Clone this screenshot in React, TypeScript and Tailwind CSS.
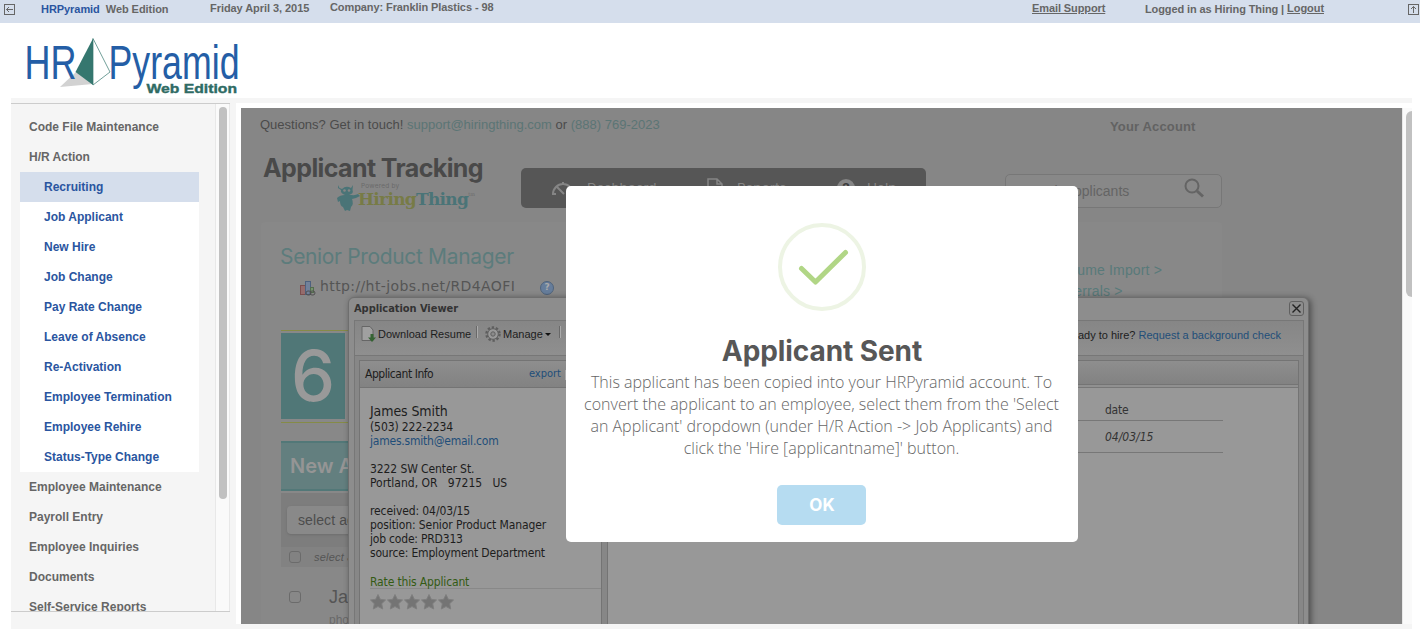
import { ReactNode } from 'react'
import clsx from 'clsx'

const subItems = [
  'Recruiting',
  'Job Applicant',
  'New Hire',
  'Job Change',
  'Pay Rate Change',
  'Leave of Absence',
  'Re-Activation',
  'Employee Termination',
  'Employee Rehire',
  'Status-Type Change',
]

const lowerItems = [
  'Employee Maintenance',
  'Payroll Entry',
  'Employee Inquiries',
  'Documents',
  'Self-Service Reports',
]

function TopBar() {
  return (
    <header className="flex h-[23px] items-start bg-[#d5deec] text-[11px] leading-[13px] font-bold tracking-[-0.060px] text-[#666] whitespace-nowrap">
      <svg className="mt-1 ml-1 h-[11px] w-[11px] shrink-0" viewBox="0 0 11 11" fill="none" stroke="#666">
        <rect x="0.5" y="0.5" width="10" height="10" />
        <path d="M2.5 5.5H9M5 3L2.5 5.5L5 8" />
      </svg>
      <div className="mt-[3px] ml-[26px] w-[169px]">
        <span className="text-[#2a55a0]">HRPyramid</span>
        <span className="ml-1.5">Web Edition</span>
      </div>
      <span className="mt-[2px] w-[120px]">Friday April 3, 2015</span>
      <span className="mt-px w-[702px] tracking-[-0.090px]">Company: Franklin Plastics - 98</span>
      <span className="mt-[2px] w-[113px] tracking-[-0.100px] underline">Email Support</span>
      <span className="mt-[3px] tracking-[-0.100px]">Logged in as Hiring Thing |</span>
      <span className="mt-[2px] ml-[3px] underline">Logout</span>
      <svg className="mt-1 mr-[1px] ml-auto h-[11px] w-[11px] shrink-0" viewBox="0 0 11 11" fill="none" stroke="#666">
        <rect x="0.5" y="0.5" width="10" height="10" />
        <path d="M5.5 9V2.5M3 5L5.5 2.5L8 5" />
      </svg>
    </header>
  )
}

function Logo() {
  return (
    <svg className="ml-5 block h-[75px] w-[240px]" viewBox="20 23 240 75">
      <path d="M60 87L76 72L93 84Z" fill="#d2d2d2" />
      <g fontFamily="'Liberation Sans', sans-serif" fontSize="49" fill="#245ea6">
        <text x="24.500" y="79" textLength="52" lengthAdjust="spacingAndGlyphs">HR</text>
        <text x="108.500" y="79" textLength="131" lengthAdjust="spacingAndGlyphs">Pyramid</text>
      </g>
      <path d="M93 38.500L75.500 72L93 85Z" fill="#35776f" />
      <path d="M93 38.500L110 72L93 85Z" fill="#fff" stroke="#35776f" strokeWidth="0.700" />
      <text x="146.500" y="93" fontFamily="'Liberation Sans', sans-serif" fontWeight="700" fontSize="13.500" fill="#2f6b64" stroke="#2f6b64" strokeWidth="0.400" textLength="90.500" lengthAdjust="spacingAndGlyphs">
        Web Edition
      </text>
    </svg>
  )
}

function Sidebar() {
  return (
    <aside className="flex h-[509px] w-[219px] shrink-0 overflow-hidden border-y border-[#ccc] text-[12px] leading-[30px] font-bold text-[#666]">
      <nav className="w-[188px] pt-2 pl-[9px]">
        <div className="pl-[9px]">Code File Maintenance</div>
        <div className="pl-[9px]">H/R Action</div>
        <ul className="bg-white text-[#2a55a0]">
          {subItems.map((item, i) => (
            <li key={item} className={clsx('h-[30px] pl-6', i === 0 && 'bg-[#d5deec]')}>{item}</li>
          ))}
        </ul>
        {lowerItems.map((item) => (
          <div key={item} className="h-[30px] pl-[9px]">{item}</div>
        ))}
      </nav>
      <div className="ml-auto w-[15px] border-x border-[#e8e8e8] bg-[#fafafa] pt-[3px] pl-[3px]">
        <div className="h-[392px] w-2 rounded-full bg-[#c1c1c1]" />
      </div>
    </aside>
  )
}

function Mascot() {
  return (
    <svg className="h-7 w-[23px] shrink-0" viewBox="0 0 23 28" fill="#4a7477">
      <path d="M1 1L2.500 4L5 5Q9 1 14 4L16 1L15.500 6Q17 10 12 10.500Q18 12 21 10L23 12L19 14L15 15Q17 20 14 23L13 27L10 26L8 27L6 23Q3 22 3 17L1 18L0 14Q3 11 8 11Q3 9 4 6L1 4Z" />
      <circle cx="7.500" cy="6.500" r="1.300" fill="#868686" />
      <circle cx="12" cy="6.500" r="1.300" fill="#868686" />
    </svg>
  )
}

function PageTop() {
  return (
    <div className="h-[114px]">
      <div className="flex h-[34px] items-center pl-[19px] text-[13px] text-[#4b4b4b]">
        <p className="w-[850px] tracking-[0.010px]">
          Questions? Get in touch! <span className="text-[#5b7575]">support@hiringthing.com</span> or{' '}
          <span className="text-[#5b7575]">(888) 769-2023</span>
        </p>
        <span className="mt-1 font-bold tracking-[0.150px] text-[#626262]">Your Account</span>
      </div>
      <div className="flex pl-[22px]">
        <div className="mt-2.5 w-[258px] shrink-0">
          <h1 className="font-['Inter'] text-[25px] leading-8 font-bold tracking-[-0.600px] whitespace-nowrap text-[#494949]">Applicant Tracking</h1>
          <div className="flex pl-[74px]">
            <Mascot />
            <div className="-mt-[3px] ml-[-2px] whitespace-nowrap">
              <div className="h-[7px] pl-[3px] font-['Inter'] text-[6.500px] leading-[10px] tracking-[0.200px] text-[#6a6a6a]">Powered by</div>
              <div className="flex font-['DejaVu_Serif'] text-[17px] leading-[22px] font-bold tracking-[-0.700px]">
                <span className="text-[#777b46]">Hiring</span>
                <span className="text-[#4a7477]">Thing</span>
                <span className="text-[5px] leading-3 font-normal tracking-normal text-[#6c6c6c]">tm</span>
              </div>
            </div>
          </div>
        </div>
        <div className="mt-[26px] flex h-10 w-[405px] shrink-0 rounded-[5px] bg-[#565656] font-['Inter'] text-[13.500px] text-[#858585]">
          <div className="flex h-10 w-[155px] items-center pl-[30px]">
            <svg className="h-5 w-6" viewBox="0 0 24 20" fill="none" stroke="#858585" strokeWidth="2">
              <path d="M2 16A10 10 0 0 1 22 16M1 16H5M23 16H19M12 4V7M5 8L13 16" />
            </svg>
            <span className="ml-3">Dashboard</span>
          </div>
          <div className="flex h-10 w-[130px] items-center pl-[31px]">
            <svg className="h-5 w-4" viewBox="0 0 16 20" fill="none" stroke="#858585" strokeWidth="1.500">
              <path d="M1 1H10L15 6V19H1ZM10 1V6H15M4 9H12" />
            </svg>
            <span className="ml-3.5">Reports</span>
          </div>
          <div className="flex h-10 items-center pl-[31px]">
            <span className="flex h-[18px] w-[18px] items-center justify-center rounded-full bg-[#858585] font-bold text-[#3d3d3d]">?</span>
            <span className="ml-3">Help</span>
          </div>
        </div>
        <div className="mt-8 ml-[79px] flex h-[34px] w-[217px] shrink-0 items-center rounded-[5px] border border-[#777] bg-[#888] pr-[17px] pl-3 text-[14px] text-[#646464]">
          <span>Search applicants</span>
          <svg className="-mt-1.5 ml-auto h-5 w-5" viewBox="0 0 20 20" fill="none" stroke="#646464" strokeWidth="2">
            <circle cx="8" cy="8" r="6.500" />
            <path d="M13 13L19 18.500" strokeWidth="3" />
          </svg>
        </div>
      </div>
    </div>
  )
}

function JobCard() {
  return (
    <div className="ml-5 h-[402px] w-[961px] rounded-t bg-[#888] px-5 pt-5">
      <div className="flex justify-between">
        <div className="-ml-px">
          <h2 className="font-['Inter'] text-[21px] leading-[30px] tracking-[-0.340px] text-[#5c7c7c]">Senior Product Manager</h2>
          <div className="flex h-7 items-center pl-5 font-['DejaVu_Sans'] text-[14px] text-[#555]">
            <svg className="mt-1 mr-1 h-[15px] w-4" viewBox="0 0 16 15">
              <rect x="0.500" y="4.500" width="5" height="9" fill="#956c6c" stroke="#7b4e4e" />
              <rect x="5.500" y="0.500" width="5" height="13" fill="#71819b" stroke="#4d617f" />
              <rect x="10.500" y="6.500" width="3" height="5" fill="#76936e" stroke="#536c4e" />
              <rect x="6" y="10" width="5" height="4" rx="2" fill="none" stroke="#505050" />
              <rect x="10" y="10" width="5" height="4" rx="2" fill="none" stroke="#505050" />
            </svg>
            <span className="w-[196px] tracking-[0.390px]">http://ht-jobs.net/RD4AOFI</span>
            <span className="mt-1 ml-6 flex h-3.5 w-3.5 items-center justify-center rounded-full border border-[#50647c] bg-[#667d9b] text-[9px] font-bold text-[#aaa]">?</span>
          </div>
        </div>
        <div className="w-[150px] pt-[18px] text-[14px] leading-[21px] tracking-[0.150px] text-[#587a7a]">
          <div>Resume Import &gt;</div>
          <div>Referrals &gt;</div>
        </div>
      </div>
      <div className="mt-7 w-[120px] border-y border-[#858b47] pt-0.5 pb-[3px]">
        <div className="h-[86px] w-16 bg-[#507777] text-center font-['Inter'] text-[70px] leading-[85px] font-medium text-[#999]">6</div>
      </div>
      <div className="mt-[18px] h-[50px] border-y-2 border-[#527878] bg-[#637f7f] pl-[9px] font-['Inter'] text-[20px] leading-[46px] font-semibold text-[#959595]">New Applicants</div>
      <div className="mt-0.5 h-[54px] bg-[#7d7d7d] px-1.5 pt-[13px]">
        <div className="h-7 w-[130px] rounded-sm bg-[#898989] pl-[11px] text-[14px] leading-7 tracking-[0.100px] text-[#4c4c4c] shadow">select action</div>
      </div>
      <div className="flex h-5 items-center bg-[#828282] pl-2 text-[11px] tracking-[0.200px] text-[#555] italic">
        <span className="mr-[13px] h-3 w-3 rounded-[3px] border border-[#6b6b6b]" />
        select all
      </div>
      <div className="flex pt-6 pl-2">
        <span className="h-3 w-3 rounded-[3px] border border-[#6b6b6b]" />
        <div className="-mt-[7px] ml-[28px] text-[#555]">
          <div className="text-[18px] leading-[26px]">James Smith</div>
          <div className="text-[12px] leading-[20px] text-[#696969]">phone</div>
        </div>
      </div>
    </div>
  )
}

function Separator() {
  return <span className="h-3 w-0.5 border-r border-[#aaa] bg-[#696969]" />
}

function PanelHeader({ children, className }: { children?: ReactNode; className: string }) {
  return (
    <div className={clsx('flex items-center border-b border-[#747474] bg-linear-to-b from-[#8e8e8e] to-[#828282]', className)}>
      {children}
    </div>
  )
}

function ApplicationViewer() {
  return (
    <section className="absolute top-[189px] left-[107px] h-[340px] w-[961px] rounded-t-[6px] border border-[#6e6e6e] bg-[#8d8d8d] pr-1 pl-[5px] font-['DejaVu_Sans_Condensed'] text-[#1d1d1d] shadow-[2px_1px_6px_rgba(0,0,0,0.45)]">
      <div className="flex h-[22px] items-center justify-between text-[11px] font-bold text-[#333]">
        <span className="tracking-[-0.050px]">Application Viewer</span>
        <svg className="-mt-0.5 h-[15px] w-[15px]" viewBox="0 0 15 15" fill="none" stroke="#484848">
          <rect x="0.500" y="0.500" width="14" height="14" rx="2.500" stroke="#606060" />
          <path d="M3.500 3.500L11.500 11.500M11.500 3.500L3.500 11.500" stroke="#222" strokeWidth="1.400" />
        </svg>
      </div>
      <div className="h-[330px] border border-[#777] bg-[#878787]">
        <div className="flex h-[35px] items-start border-b border-[#777] bg-linear-to-b from-[#868686] to-[#8f8f8f] pt-[5px] pr-[22px] pl-1.5 font-['Liberation_Sans'] text-[11px] leading-4">
          <svg className="mr-0.5 h-4 w-[15px] shrink-0" viewBox="0 0 15 16">
            <path d="M1 0.500H9L12 4V14.500H1Z" fill="#a0a0a0" stroke="#666" />
            <path d="M9.500 8H12.500V11.500H15L11 16L7 11.500H9.500Z" fill="#356333" />
          </svg>
          <span className="mr-1 w-[94px] shrink-0 text-[11px] tracking-[0.020px] whitespace-nowrap">Download Resume</span>
          <Separator />
          <svg className="mr-0.5 ml-[7px] h-4 w-4" viewBox="0 0 16 16">
            <circle cx="8" cy="8" r="6.500" fill="none" stroke="#5e5e5e" strokeWidth="2.500" strokeDasharray="2.300 1.784" />
            <circle cx="8" cy="8" r="5.300" fill="#999" stroke="#606060" />
            <circle cx="8" cy="8" r="2.200" fill="#8b8b8b" stroke="#606060" />
          </svg>
          <span>Manage</span>
          <span className="mt-[7px] mr-2 ml-0.5 border-x-[3px] border-t-[3px] border-x-transparent border-t-[#111]" />
          <Separator />
          <span className="mt-px ml-auto">
            Ready to hire? <span className="text-[#1f4e79]">Request a background check</span>
          </span>
        </div>
        <div className="flex gap-[5px] px-1 pt-1">
          <div className="h-[290px] w-[243px] border border-[#747474] bg-[#989898]">
            <PanelHeader className="h-[27px] justify-between pr-[26px] pl-[5px] text-[12px] tracking-[-0.450px]">
              <span>Applicant Info</span>
              <span className="mt-px flex items-center text-[11px] tracking-normal text-[#1f4e79]">
                export <span className="ml-1 h-2.5 w-2.5 border border-[#aaa] bg-[#5a7899]" />
              </span>
            </PanelHeader>
            <div className="pt-[15px] pl-2.5 text-[12px] leading-[14px] tracking-[-0.100px]">
              <div className="text-[14px] leading-[17px]">James Smith</div>
              <div>(503) 222-2234</div>
              <div className="tracking-[-0.220px] text-[#1f4e79]">james.smith@email.com</div>
              <div className="mt-3.5">3222 SW Center St.</div>
              <div className="tracking-normal whitespace-pre">Portland, OR   97215   US</div>
              <div className="mt-3.5">received: 04/03/15</div>
              <div>position: Senior Product Manager</div>
              <div className="tracking-[-0.200px]">job code: PRD313</div>
              <div className="tracking-[-0.180px]">source: Employment Department</div>
              <div className="mt-[15px] h-3.5 border-b border-[#888] tracking-[-0.150px] text-[#345b14]">Rate this Applicant</div>
              <div className="mt-[5px] flex gap-px">
                {[1, 2, 3, 4, 5].map((n) => (
                  <svg key={n} className="h-4 w-4" viewBox="0 0 16 16">
                    <path d="M8 0.500L10.300 5.300L15.500 6L11.700 9.700L12.700 15L8 12.500L3.300 15L4.300 9.700L0.500 6L5.700 5.300Z" fill="#747474" stroke="#7f7f7f" />
                  </svg>
                ))}
              </div>
            </div>
          </div>
          <div className="h-[290px] grow border border-[#747474] bg-[#989898] text-[12px]">
            <PanelHeader className="h-6" />
            <div className="h-[3px] border-b border-[#777] bg-[#909090]" />
            <div className="w-[615px] pt-2 text-[#333]">
              <div className="h-[25px] border-b border-[#777] pl-[497px] leading-[28px] tracking-[-0.250px]">date</div>
              <div className="h-8 border-b border-[#777] pl-[497px] leading-8 italic">04/03/15</div>
            </div>
          </div>
        </div>
      </div>
    </section>
  )
}

function SentDialog() {
  return (
    <div className="absolute top-[78px] left-[325px] flex h-[356px] w-[512px] flex-col items-center rounded-[5px] bg-white pt-[37px] font-['Open_Sans']">
      <svg className="h-[88px] w-[88px]" viewBox="0 0 88 88" fill="none">
        <circle cx="44" cy="44" r="42" stroke="#edf4e4" strokeWidth="4" />
        <path d="M23.500 45.500L37.500 59L67.500 29.500" stroke="#b1d686" strokeWidth="5" strokeLinecap="round" strokeLinejoin="round" />
      </svg>
      <h2 className="mt-5 font-['Inter'] text-[28px] leading-10 font-bold tracking-[-0.080px] text-[#575757]">Applicant Sent</h2>
      <p className="mr-px w-[478px] text-center text-[16px] leading-[22px] font-light whitespace-nowrap text-[#666]">
        This applicant has been copied into your HRPyramid account. To
        <br />
        convert the applicant to an employee, select them from the 'Select
        <br />
        an Applicant' dropdown (under H/R Action -&gt; Job Applicants) and
        <br />
        click the 'Hire [applicantname]' button.
      </p>
      <button className="mt-[26px] mr-0.5 h-10 w-[89px] rounded-[5px] bg-[#b6dcf1] pt-0.5 pl-0.5 font-['Inter'] text-[17px] font-bold text-white">OK</button>
    </div>
  )
}

export default function App() {
  return (
    <div className="h-[642px] w-[1420px] overflow-hidden bg-white font-['Liberation_Sans',sans-serif]">
      <TopBar />
      <Logo />
      <div className="ml-[11px] flex h-[531px] w-[1401px] bg-[#f5f5f5] pt-[5px]">
        <Sidebar />
        <main className="ml-1.5 flex h-[521px] w-[1176px] bg-white pt-[5px] pl-[5px]">
          <div className="relative h-[516px] w-[1161px] shrink-0 overflow-hidden bg-[#868686]">
            <PageTop />
            <JobCard />
            <ApplicationViewer />
            <SentDialog />
          </div>
          <div className="w-2.5 border-l border-[#e8e8e8] bg-[#fafafa] pt-[3px] pl-[3px]">
            <div className="h-[186px] w-1.5 rounded-l-full bg-[#c1c1c1]" />
          </div>
        </main>
      </div>
    </div>
  )
}
